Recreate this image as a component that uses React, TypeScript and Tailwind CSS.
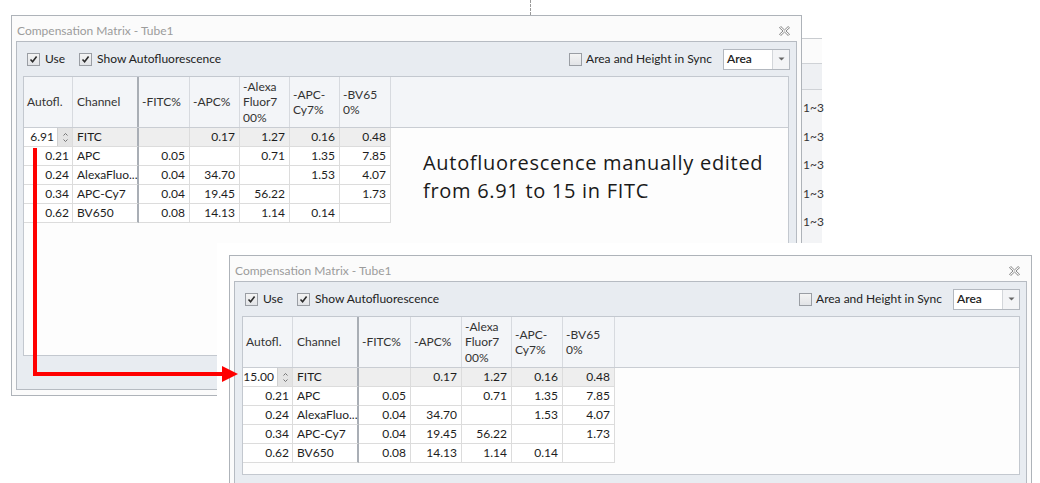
import type { ReactNode } from 'react'

const ROWS = [
  { a: '6.91', ch: 'FITC', v: ['', '0.17', '1.27', '0.16', '0.48'] },
  { a: '0.21', ch: 'APC', v: ['0.05', '', '0.71', '1.35', '7.85'] },
  { a: '0.24', ch: 'AlexaFluo...', v: ['0.04', '34.70', '', '1.53', '4.07'] },
  { a: '0.34', ch: 'APC-Cy7', v: ['0.04', '19.45', '56.22', '', '1.73'] },
  { a: '0.62', ch: 'BV650', v: ['0.08', '14.13', '1.14', '0.14', ''] },
]

const HEADERS: ReactNode[] = [
  '-FITC%',
  '-APC%',
  <>
    -Alexa
    <br />
    Fluor7
    <br />
    00%
  </>,
  <>
    -APC-
    <br />
    Cy7%
  </>,
  <>
    -BV65
    <br />
    0%
  </>,
]

function CheckBox({ checked }: { checked: boolean }) {
  return (
    <span className="flex h-[13px] w-[13px] items-center justify-center border border-[#9a9ea4] bg-gradient-to-b from-[#f4f4f4] to-[#e2e4e7]">
      {checked && (
        <svg width="9" height="9" viewBox="0 0 9 9">
          <path d="M1.5 4.5 L3.6 6.8 L7.6 1.6" fill="none" stroke="#2b2b2b" strokeWidth="1.6" />
        </svg>
      )}
    </span>
  )
}

function CloseIcon() {
  return (
    <svg width="11" height="10" viewBox="0 0 11 10">
      <path
        d="M0.5 1.8 L1.8 0.5 L5.5 4 L9.2 0.5 L10.5 1.8 L6.9 5 L10.5 8.2 L9.2 9.5 L5.5 6 L1.8 9.5 L0.5 8.2 L4.1 5 Z"
        fill="#fff"
        stroke="#7a7a7a"
        strokeWidth="0.9"
      />
    </svg>
  )
}

function Spinner() {
  return (
    <span className="flex h-full w-[15px] flex-col items-center justify-center gap-[3px] border-l border-[#d0d0d0] bg-[#e4e4e4]">
      <svg width="5" height="3" viewBox="0 0 5 3">
        <path d="M0.5 2.5 L2.5 0.5 L4.5 2.5" fill="none" stroke="#666" strokeWidth="0.9" />
      </svg>
      <svg width="5" height="3" viewBox="0 0 5 3">
        <path d="M0.5 0.5 L2.5 2.5 L4.5 0.5" fill="none" stroke="#666" strokeWidth="0.9" />
      </svg>
    </span>
  )
}

type WindowProps = {
  autofl: string
  size: string
  headCols: string
  rowCols: string
  tableInset: string
}

function MatrixWindow({ autofl, size, headCols, rowCols, tableInset }: WindowProps) {
  return (
    <div className={`flex flex-col border border-[#aeb3b9] bg-[#fbfbfb] ${size}`}>
      <div className="flex h-[25px] shrink-0 items-center justify-between pl-[5px] pr-[11px] pt-[4px]">
        <span className="text-[12px] text-[#9c9c9c]">Compensation Matrix - Tube1</span>
        <CloseIcon />
      </div>
      <div className="mx-[4px] mb-[5px] flex min-h-0 flex-1 flex-col border border-[#b6bbc2] bg-[#e8ecf1]">
        <div className="flex h-[34px] shrink-0 items-center justify-between pl-[10px] pr-[6px]">
          <div className="flex items-center">
            <CheckBox checked />
            <span className="ml-[5px]">Use</span>
            <span className="ml-[14px]">
              <CheckBox checked />
            </span>
            <span className="ml-[5px]">Show Autofluorescence</span>
          </div>
          <div className="flex items-center">
            <CheckBox checked={false} />
            <span className="ml-[4px]">Area and Height in Sync</span>
            <div className="ml-[11px] flex h-[21px] w-[67px] items-stretch border border-[#b3b8bf] bg-white">
              <span className="flex flex-1 items-center pl-[3px] font-semibold text-[#222]">Area</span>
              <span className="flex w-[17px] items-center justify-center border-l border-[#d3d6da] bg-[#f3f4f6]">
                <svg width="7" height="4" viewBox="0 0 7 4">
                  <path d="M0.5 0.5 L3.5 3.5 L6.5 0.5 Z" fill="#666" />
                </svg>
              </span>
            </div>
          </div>
        </div>
        <div className={`mb-[33px] min-h-0 flex-1 border border-[#c3c8cf] bg-[#fdfdfd] ${tableInset}`}>
          <div className={`grid h-[51px] border-b border-[#c9cdd3] bg-[#f3f5f8] text-[#333] ${headCols}`}>
            <div className="flex items-center border-r border-[#d7dadf] pl-[3px]">Autofl.</div>
            <div className="flex items-center border-r-2 border-[#a9aeb5] pl-[4px]">Channel</div>
            {HEADERS.map((h, i) => (
              <div key={i} className="flex items-center border-r border-[#d7dadf] pl-[3px] leading-[15.5px]">
                {h}
              </div>
            ))}
            <div />
          </div>
          {ROWS.map((r, i) => (
            <div
              key={r.ch}
              className={`grid h-[19px] w-fit text-[#1d1d1d] ${rowCols} ${i === 0 ? 'bg-[#eeeeee]' : 'bg-white'}`}
            >
              {i === 0 ? (
                <div className="flex items-stretch border-r border-b border-[#dcdcdc] bg-white">
                  <span className="flex flex-1 items-center justify-end pr-[3px]">{autofl}</span>
                  <Spinner />
                </div>
              ) : (
                <div className="flex items-center justify-end border-r border-b border-[#dcdcdc] pr-[3px]">{r.a}</div>
              )}
              <div className="flex items-center border-r-2 border-b border-r-[#a9aeb5] border-b-[#dcdcdc] pl-[4px]">
                {r.ch}
              </div>
              {r.v.map((v, j) => (
                <div key={j} className="flex items-center justify-end border-r border-b border-[#dcdcdc] pr-[4px]">
                  {v}
                </div>
              ))}
            </div>
          ))}
        </div>
      </div>
    </div>
  )
}

function BackStrip({ labels, size }: { labels: string[]; size: string }) {
  return (
    <div className={`flex flex-col border-t border-[#c9ccd0] bg-[#f3f4f6] ${size}`}>
      <div className="h-[25px] shrink-0 border-b border-[#cfd2d6] bg-[#fbfbfb]" />
      <div className="h-[26px] shrink-0 border-b border-[#cfd2d6] bg-[#eef0f3]" />
      <div className="flex flex-col pl-[13px] pt-[8px]">
        {labels.map((l, i) => (
          <div key={i} className="h-[28.5px] leading-[20px] text-[#333]">
            {l}
          </div>
        ))}
      </div>
    </div>
  )
}

export default function App() {
  return (
    <div className="relative h-[483px] w-[1040px] overflow-hidden bg-white font-['Lato',sans-serif] text-[12px] text-[#222]">
      <div className="absolute left-[530px] top-0 h-[15px] border-l border-dashed border-[#999]" />
      <div className="absolute left-[756px] top-[244px] h-[10px] border-l border-dashed border-[#999]" />

      <div className="absolute left-[790px] top-[38px]">
        <BackStrip labels={['1~3', '1~3', '1~3', '1~3', '1~3']} size="h-[207px] w-[32px]" />
      </div>
      <div className="absolute left-[11px] top-[15px]">
        <MatrixWindow
          autofl="6.91"
          size="h-[381px] w-[791px]"
          tableInset="ml-[6px] mr-[7px]"
          headCols="grid-cols-[49px_66px_51px_50px_50px_50px_51px_1fr]"
          rowCols="grid-cols-[49px_66px_51px_50px_50px_50px_51px]"
        />
      </div>

      <div className="absolute left-[1020px] top-[277px]">
        <BackStrip labels={['1~', '1~', '1~', '1~', '1~']} size="h-[220px] w-[40px]" />
      </div>
      <div className="absolute left-[217px] top-[243px] bg-white p-[12px]">
        <MatrixWindow
          autofl="15.00"
          size="h-[260px] w-[803px]"
          tableInset="ml-[7px] mr-[6px]"
          headCols="grid-cols-[50px_66px_52px_51px_50px_51px_52px_1fr]"
          rowCols="grid-cols-[50px_66px_52px_51px_50px_51px_52px]"
        />
      </div>

      <p className="absolute left-[423px] top-[149px] font-['Open_Sans',sans-serif] text-[20px] leading-[28px] tracking-[0.7px] text-[#1a1a1a]">
        Autofluorescence manually edited
        <br />
        from 6.91 to 15 in FITC
      </p>

      <svg className="absolute left-0 top-0" width="1040" height="483" viewBox="0 0 1040 483">
        <path d="M35 148 L35 374 L224 374" fill="none" stroke="#ff0000" strokeWidth="4" />
        <path d="M222 366 L238 374 L222 382 Z" fill="#ff0000" />
      </svg>
    </div>
  )
}
